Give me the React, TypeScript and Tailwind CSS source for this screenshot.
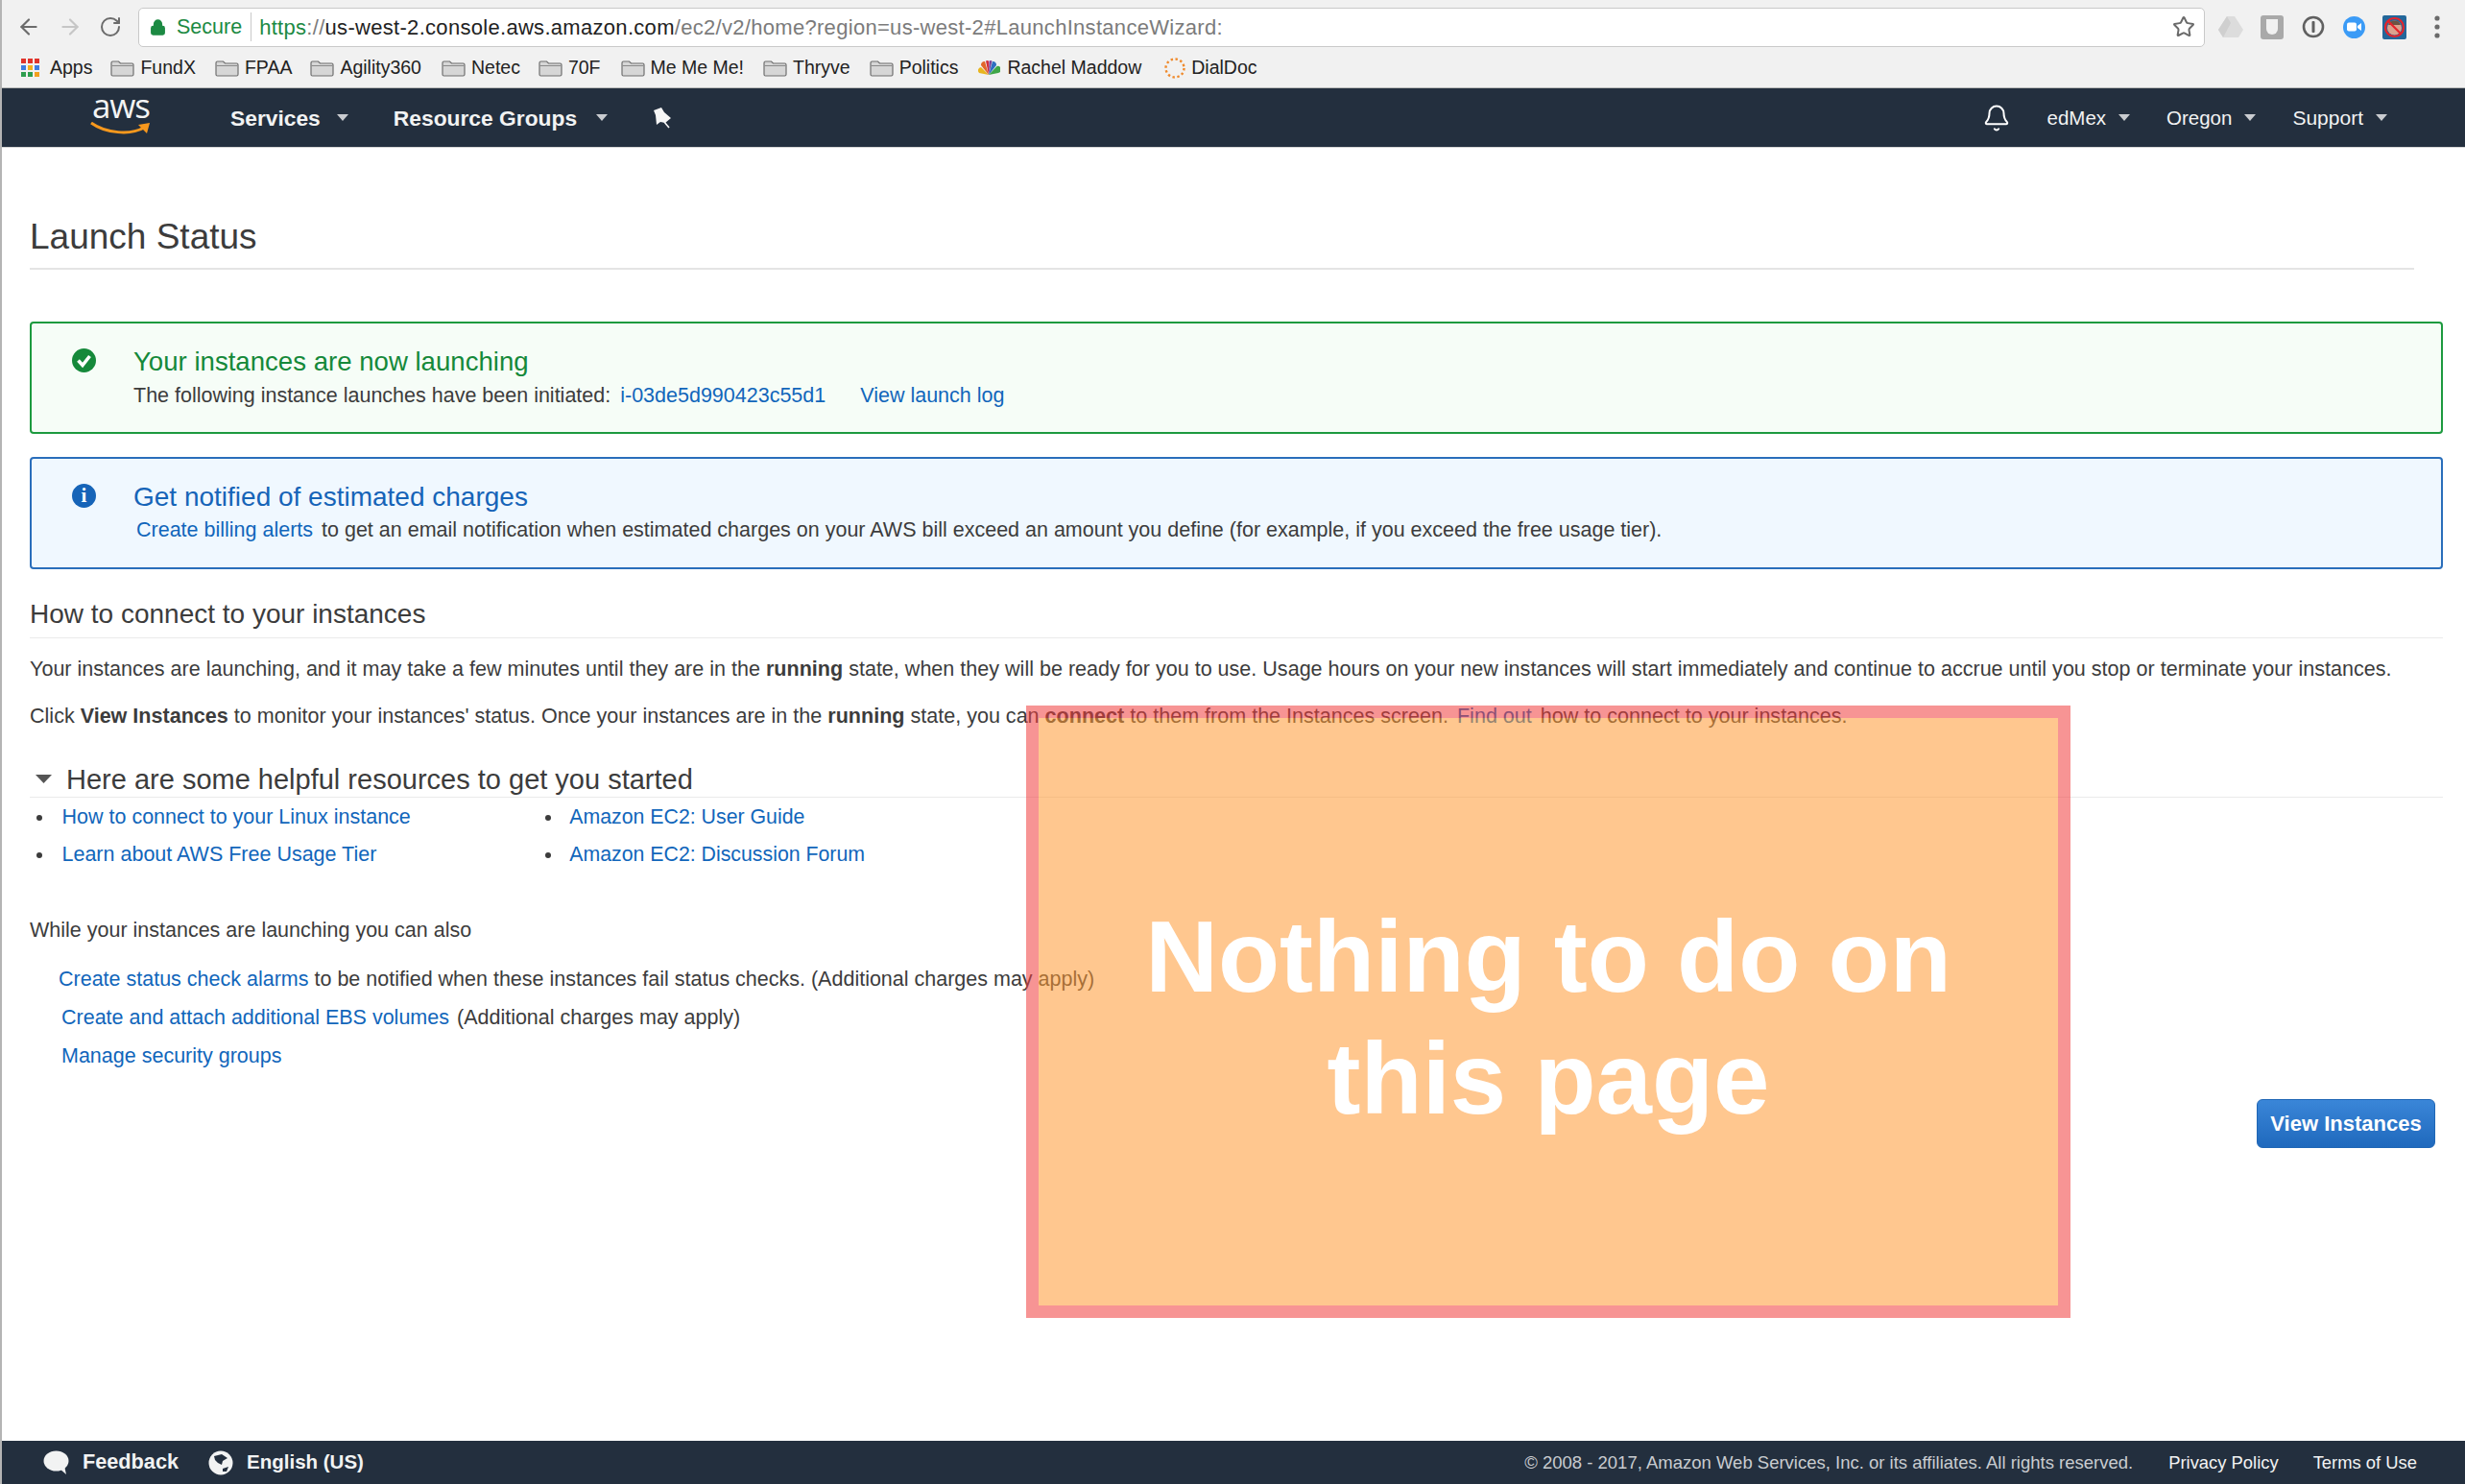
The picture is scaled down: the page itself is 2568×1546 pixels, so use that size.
import { ArrowLeft, ArrowRight, Bell, Lock, RotateCw, Star } from "lucide-react";

const bookmarks = [
  { label: "FundX", mr: "mr-[20px]" },
  { label: "FPAA", mr: "mr-[19px]" },
  { label: "Agility360", mr: "mr-[21px]" },
  { label: "Netec", mr: "mr-[19px]" },
  { label: "70F", mr: "mr-[21px]" },
  { label: "Me Me Me!", mr: "mr-[20px]" },
  { label: "Thryve", mr: "mr-[20px]" },
  { label: "Politics", mr: "mr-[20px]" },
];

const FolderIcon = () => (
  <svg width="25" height="18" viewBox="0 0 25 18" className="mr-[6px] shrink-0">
    <path d="M1 3.5 a1.5 1.5 0 0 1 1.5-1.5 h6 l2 2 h12 a1.5 1.5 0 0 1 1.5 1.5 v10 a1.5 1.5 0 0 1-1.5 1.5 h-20 a1.5 1.5 0 0 1-1.5-1.5z" fill="#d6d6d6" stroke="#6f6f6f" strokeWidth="1.2" />
    <path d="M1.5 6.5 h22" stroke="#8a8a8a" strokeWidth="1" />
  </svg>
);

const AppsIcon = () => (
  <svg width="20" height="20" viewBox="0 0 20 20" className="mr-[10px] shrink-0">
    {[
      [0, 0, "#e0342b"], [7, 0, "#e0342b"], [14, 0, "#e0342b"],
      [0, 7, "#3e7de0"], [7, 7, "#f2b01e"], [14, 7, "#3e7de0"],
      [0, 14, "#2f9e4f"], [7, 14, "#2f9e4f"], [14, 14, "#f2a01e"],
    ].map(([x, y, c], i) => (
      <rect key={i} x={x as number} y={y as number} width="5" height="5" fill={c as string} />
    ))}
  </svg>
);

const Peacock = () => (
  <svg width="24" height="18" viewBox="0 0 24 18" className="mr-[7px] shrink-0">
    <path d="M12 16 L2 14 a3.5 3.5 0 0 1 2-6z" fill="#e8b51e" />
    <path d="M12 16 L4 6 a3.5 3.5 0 0 1 4-4z" fill="#e2662a" />
    <path d="M12 16 L9 1.5 a3 3 0 0 1 3 0z" fill="#d22d3c" />
    <path d="M12 16 L12.5 1.5 a3 3 0 0 1 3 0z" fill="#7d3f98" />
    <path d="M12 16 L16 2 a3.5 3.5 0 0 1 4 4z" fill="#2f6fc0" />
    <path d="M12 16 L20.5 7 a3.5 3.5 0 0 1 1.5 7z" fill="#3fa648" />
  </svg>
);

const DialDocIcon = () => (
  <svg width="24" height="24" viewBox="0 0 24 24" className="mr-[5px] shrink-0">
    <circle cx="12" cy="12" r="9.5" fill="none" stroke="#ef8a2c" strokeWidth="2.4" strokeDasharray="2.4 2.6" />
  </svg>
);

const AwsLogo = () => (
  <div className="relative w-[62px] h-[46px] ml-[92px] mr-[84px] shrink-0 text-white">
    <span className="absolute left-[2px] top-[-10px] text-[35px] leading-[40px] font-['Open_Sans',sans-serif] tracking-[-1.2px] text-[#f4f4f4]">aws</span>
    <svg width="62" height="14" viewBox="0 0 62 14" className="absolute left-0 top-[27px]">
      <path d="M1 1 C16 12 42 14 56 6" fill="none" stroke="#f7981d" strokeWidth="3" />
      <path d="M50 3 L62 1 L59 12z" fill="#f7981d" />
    </svg>
  </div>
);

const Caret = ({ className }: { className: string }) => (
  <svg width="12" height="7" viewBox="0 0 12 7" className={className}>
    <path d="M0 0 H12 L6 7z" fill="#c9ccd0" />
  </svg>
);

const Pin = () => (
  <svg width="20" height="22" viewBox="0 0 20 22">
    <path d="M1 3 L9 0 L12 5 L19 11 L13 16 L8 15 L4 18 L3 8z" fill="#f6f6f6" />
    <path d="M12 15 L17 21" stroke="#f6f6f6" strokeWidth="1.6" />
  </svg>
);

const Link = ({ children, className = "" }: { children: React.ReactNode; className?: string }) => (
  <a className={`text-[#1166bb] ${className}`}>{children}</a>
);

export default function App() {
  return (
    <div className="relative flex h-[1546px] w-[2568px] flex-col overflow-hidden border-l-2 border-[#b4b4b4] bg-white font-['Liberation_Sans',Arial,sans-serif] text-[21.5px] text-[#3c3c3c]">
      {/* browser chrome */}
      <div className="h-[92px] shrink-0 border-b border-[#b9b9b9] bg-[#f1f1f1]">
        <div className="flex h-[55px] items-center pt-[1px]">
          <ArrowLeft size={26} strokeWidth={2} className="ml-[15px] text-[#6b6b6b]" />
          <ArrowRight size={26} strokeWidth={2} className="ml-[17px] text-[#c6c6c6]" />
          <RotateCw size={24} strokeWidth={2} className="ml-[17px] text-[#6b6b6b]" />
          <div className="ml-[17px] flex h-[41px] w-[2153px] items-center rounded-[5px] border border-[#c9c9c9] bg-white">
            <Lock size={17} strokeWidth={3} className="ml-[11px] fill-[#1c8a43] text-[#1c8a43]" />
            <span className="ml-[11px] text-[#1c8a43]">Secure</span>
            <span className="ml-[9px] h-[30px] w-px bg-[#c9c9c9]" />
            <span className="ml-[8px] whitespace-nowrap text-[22px] tracking-[0.3px] text-[#7b7b7b]">
              <span className="text-[#1c8a43]">https</span>://<span className="text-[#222]">us-west-2.console.aws.amazon.com</span>/ec2/v2/home?region=us-west-2#LaunchInstanceWizard:
            </span>
            <Star size={24} strokeWidth={2} className="ml-auto mr-[9px] text-[#6a6a6a]" />
          </div>
          <div className="ml-[14px] flex items-center">
            <svg width="26" height="24" viewBox="0 0 26 24">
              <path d="M9 1 H17 L26 15 L21 23 H5 L0 15z" fill="#dcdcdc" />
              <path d="M9 1 L13 8 L5 23 L0 15z" fill="#cfcfcf" />
            </svg>
            <div className="ml-[18px] flex h-[25px] w-[24px] items-center justify-center rounded-[3px] bg-[#a9a9a9]">
              <div className="h-[16px] w-[12px] rounded-b-full rounded-t-[6px] bg-[#f1f1f1]" />
            </div>
            <svg width="24" height="24" viewBox="0 0 24 24" className="ml-[19px]">
              <circle cx="12" cy="12" r="10" fill="none" stroke="#606060" strokeWidth="2.6" />
              <rect x="10.5" y="6" width="3" height="12" rx="1" fill="#606060" />
            </svg>
            <div className="ml-[19px] flex h-[23px] w-[23px] items-center justify-center rounded-full bg-[#3b9bf6]">
              <svg width="15" height="10" viewBox="0 0 15 10">
                <rect x="0" y="0.5" width="10" height="9" rx="2" fill="#fff" />
                <path d="M11 4 L15 1 V9 L11 6z" fill="#fff" />
              </svg>
            </div>
            <svg width="25" height="25" viewBox="0 0 25 25" className="ml-[18px]">
              <rect width="25" height="25" rx="2" fill="#24679a" />
              <circle cx="12.5" cy="13" r="7.5" fill="#dba28e" />
              <path d="M6 10 a7 7 0 0 1 13 0z" fill="#6d5342" />
              <circle cx="12.5" cy="12.5" r="9.5" fill="none" stroke="#e5242b" strokeWidth="2.2" />
              <path d="M6 6 L19 19" stroke="#e5242b" strokeWidth="2.2" />
            </svg>
            <svg width="8" height="26" viewBox="0 0 8 26" className="ml-[28px]">
              <circle cx="4" cy="4" r="2.6" fill="#6b6b6b" />
              <circle cx="4" cy="13" r="2.6" fill="#6b6b6b" />
              <circle cx="4" cy="22" r="2.6" fill="#6b6b6b" />
            </svg>
          </div>
        </div>
        <div className="flex h-[32px] items-center pl-[20px] text-[19.5px] text-[#222]">
          <AppsIcon />
          <span className="mr-[19px]">Apps</span>
          {bookmarks.map((b) => (
            <div key={b.label} className={`flex items-center ${b.mr}`}>
              <FolderIcon />
              {b.label}
            </div>
          ))}
          <Peacock />
          <span className="mr-[23px]">Rachel Maddow</span>
          <DialDocIcon />
          <span>DialDoc</span>
        </div>
      </div>

      {/* aws nav */}
      <div className="flex h-[62px] shrink-0 items-center border-b border-[#d5d5d5] bg-[#232f3e] text-[#f2f3f3]">
        <AwsLogo />
        <span className="pt-[1px] text-[22.8px] font-bold">Services</span>
        <Caret className="ml-[17px] mr-[47px]" />
        <span className="pt-[1px] text-[22.8px] font-bold">Resource Groups</span>
        <Caret className="ml-[20px] mr-[47px]" />
        <Pin />
        <Bell size={30} strokeWidth={1.6} className="ml-auto text-white" />
        <span className="ml-[38px] pt-[1px] text-[20.5px]">edMex</span>
        <Caret className="ml-[13px] mr-[38px]" />
        <span className="pt-[1px] text-[20.5px]">Oregon</span>
        <Caret className="ml-[13px] mr-[38px]" />
        <span className="pt-[1px] text-[21px]">Support</span>
        <Caret className="ml-[13px] mr-[81px]" />
      </div>

      {/* page */}
      <main className="flex-1 pl-[29px] pr-[23px]">
        <h1 className="mr-[30px] mt-[69px] h-[58px] border-b-2 border-[#e4e4e4] text-[37px] leading-[48px]">Launch Status</h1>

        <div className="mt-[54px] flex h-[117px] rounded-[4px] border-2 border-[#1d9a3f] bg-[#f6fdf7]">
          <svg width="25" height="25" viewBox="0 0 25 25" className="ml-[42px] mt-[26px] shrink-0">
            <circle cx="12.5" cy="12.5" r="12.5" fill="#15893a" />
            <path d="M6.5 12.5 L11 17.5 L18.5 8" fill="none" stroke="#fff" strokeWidth="3.6" />
          </svg>
          <div className="ml-[39px] pt-[23px]">
            <div className="text-[27.6px] leading-[34px] text-[#15893a]">Your instances are now launching</div>
            <div className="leading-[36px]">
              The following instance launches have been initiated: <Link className="ml-[4px]">i-03de5d990423c55d1</Link>
              <Link className="ml-[36px]">View launch log</Link>
            </div>
          </div>
        </div>

        <div className="mt-[24px] flex h-[117px] rounded-[4px] border-2 border-[#2a6ebb] bg-[#f0f8ff]">
          <div className="ml-[42px] mt-[26px] flex h-[25px] w-[25px] shrink-0 items-center justify-center rounded-full bg-[#1664b8] font-['Liberation_Serif',serif] text-[21px] font-bold leading-none text-white">i</div>
          <div className="ml-[39px] pt-[23px]">
            <div className="text-[28px] leading-[33px] text-[#1664b8]">Get notified of estimated charges</div>
            <div className="leading-[36px]">
              <Link className="ml-[3px]">Create billing alerts</Link>
              <span className="ml-[9px]">to get an email notification when estimated charges on your AWS bill exceed an amount you define (for example, if you exceed the free usage tier).</span>
            </div>
          </div>
        </div>

        <h2 className="mt-[29px] h-[43px] border-b border-[#eaeaea] text-[28px] leading-[36px]">How to connect to your instances</h2>
        <p className="mt-[18px] whitespace-nowrap text-[21.55px] leading-[28px]">
          Your instances are launching, and it may take a few minutes until they are in the <b>running</b> state, when they will be ready for you to use. Usage hours on your new instances will start immediately and continue to accrue until you stop or terminate your instances.
        </p>
        <p className="mt-[21px] whitespace-nowrap text-[21.55px] leading-[28px]">
          Click <b>View Instances</b> to monitor your instances' status. Once your instances are in the <b>running</b> state, you can <b>connect</b> to them from the Instances screen. <Link className="ml-[3px]">Find out</Link> <span className="ml-[3px]">how to connect to your instances.</span>
        </p>

        <div className="mt-[35px] flex h-[36px] items-center border-b border-[#eaeaea] pb-[2px]">
          <svg width="17" height="9" viewBox="0 0 17 9" className="ml-[6px] mr-[15px]">
            <path d="M0 0 H17 L8.5 9z" fill="#555" />
          </svg>
          <span className="text-[29px] leading-[34px]">Here are some helpful resources to get you started</span>
        </div>
        <div className="mt-[1px] flex">
          <ul className="ml-[7px] w-[530px] list-inside list-disc leading-[39px]">
            <li><Link className="ml-[-2px]">How to connect to your Linux instance</Link></li>
            <li><Link className="ml-[-2px]">Learn about AWS Free Usage Tier</Link></li>
          </ul>
          <ul className="list-inside list-disc text-[21.3px] leading-[39px]">
            <li><Link className="ml-[-3px]">Amazon EC2: User Guide</Link></li>
            <li><Link className="ml-[-3px]">Amazon EC2: Discussion Forum</Link></li>
          </ul>
        </div>

        <p className="mt-[41px] leading-[36px]">While your instances are launching you can also</p>
        <div className="mt-[13px] flex flex-col leading-[40px]">
          <div className="ml-[30px]"><Link>Create status check alarms</Link> to be notified when these instances fail status checks. (Additional charges may apply)</div>
          <div className="ml-[33px]"><Link>Create and attach additional EBS volumes</Link><span className="ml-[8px]">(Additional charges may apply)</span></div>
          <div className="ml-[33px]"><Link>Manage security groups</Link></div>
        </div>

        <div className="mt-[25px] flex justify-end pr-[8px]">
          <button className="flex h-[51px] w-[186px] items-center justify-center rounded-[6px] border border-[#1f66b5] bg-gradient-to-b from-[#3a86d8] to-[#1f69bd] text-[22px] font-bold text-white">View Instances</button>
        </div>
      </main>

      {/* footer */}
      <div className="flex h-[45px] shrink-0 items-center bg-[#232f3e] text-[#f2f3f3]">
        <svg width="27" height="26" viewBox="0 0 27 26" className="ml-[43px]">
          <ellipse cx="13.5" cy="11" rx="13" ry="10.5" fill="#f2f3f3" />
          <path d="M17 19 L24 25 L22 16z" fill="#f2f3f3" />
        </svg>
        <span className="ml-[14px] text-[21.7px] font-bold">Feedback</span>
        <svg width="26" height="26" viewBox="0 0 26 26" className="ml-[31px]">
          <circle cx="13" cy="13" r="12.5" fill="#f2f3f3" />
          <path d="M6 6 L14 4 L20 8 L15 11 L14 15 L10 13 L7 10z M15 19 L21 17 L19 22 L15 22z" fill="#232f3e" />
        </svg>
        <span className="ml-[14px] text-[20.5px] font-bold">English (US)</span>
        <span className="ml-auto text-[18.5px] text-[#c9ccd0]">© 2008 - 2017, Amazon Web Services, Inc. or its affiliates. All rights reserved.</span>
        <span className="ml-[37px] text-[18.4px]">Privacy Policy</span>
        <span className="ml-[36px] mr-[50px] text-[18.4px]">Terms of Use</span>
      </div>

      {/* annotation over the page */}
      <div className="absolute left-[1067px] top-[735px] flex h-[638px] w-[1088px] items-center justify-center border-[13px] border-[rgba(240,60,60,0.55)] bg-[rgba(255,153,51,0.55)] bg-clip-padding pt-[12px] text-center text-[105px] font-bold leading-[127px] text-white">
        <div>Nothing to do on<br />this page</div>
      </div>
    </div>
  );
}
